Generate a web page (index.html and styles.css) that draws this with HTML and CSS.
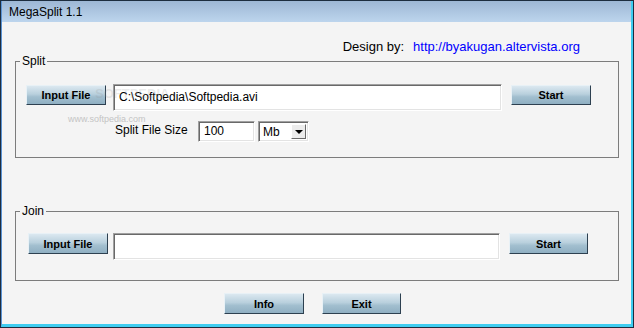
FILE: index.html
```html
<!DOCTYPE html>
<html lang="en">
<head>
  <meta charset="UTF-8" />
  <title>MegaSplit 1.1</title>
  <link rel="stylesheet" href="styles.css">
</head>
<body>
  <div class="window">
    <div class="frame">
      <div class="titlebar">MegaSplit 1.1</div>
      <div class="client">
        <div class="credits">
          <span>Design by:</span>
          <a class="link" href="#">http://byakugan.altervista.org</a>
        </div>

        <div class="group group-split">
          <div class="legend">Split</div>
          <div class="row row-split">
            <button class="btn btn-input">Input File</button>
            <div class="field field-path">C:\Softpedia\Softpedia.avi</div>
            <button class="btn btn-start">Start</button>
          </div>
          <div class="row row-size">
            <span class="size-label">Split File Size</span>
            <div class="field field-size">100</div>
            <div class="field combo">
              <span class="combo-value">Mb</span>
              <span class="combo-btn"><span class="arrow"></span></span>
            </div>
          </div>
          <div class="wm-logo">SOFTPEDIA</div>
          <div class="wm-url">www.softpedia.com</div>
        </div>

        <div class="group group-join">
          <div class="legend">Join</div>
          <div class="row row-join">
            <button class="btn btn-input">Input File</button>
            <div class="field field-path"></div>
            <button class="btn btn-start">Start</button>
          </div>
        </div>

        <div class="footer">
          <button class="btn btn-info">Info</button>
          <button class="btn btn-exit">Exit</button>
        </div>
      </div>
    </div>
  </div>
</body>
</html>
```

FILE: styles.css
```css
* { box-sizing: border-box; }
body {
  margin: 0;
  font-family: 'Liberation Sans', Arial, sans-serif;
  font-size: 12px;
  color: #000;
  background: #f4f4f4;
}
.window {
  width: 634px;
  height: 328px;
  border: 1px solid #1d2d3f;
}
.frame {
  height: 100%;
  border-left: 1px solid #5a93d4;
  border-right: 2px solid #3fcdf0;
  border-bottom: 3px solid #3fcdf0;
  display: flex;
  flex-direction: column;
}
.titlebar {
  height: 21px;
  padding: 3px 0 0 7px;
  font-size: 12px;
  line-height: 16px;
  color: #000;
  background: linear-gradient(#9db7d5, #bdd5ed);
}
.client {
  flex: 1;
  background: #f4f4f4;
}
.credits {
  display: flex;
  justify-content: flex-end;
  gap: 9px;
  margin-top: 18px;
  padding-right: 51px;
  font-size: 13px;
  line-height: 14px;
}
.link {
  color: #0000ff;
  text-decoration: none;
}

/* group boxes */
.group {
  position: relative;
  margin: 0 12px 0 13px;
  border: 1px solid #7c7c7c;
}
.group-split {
  margin-top: 7px;
  padding-bottom: 15px;
}
.group-join {
  margin-top: 53px;
  padding-bottom: 20px;
}
.legend {
  width: fit-content;
  margin: -8px 0 0 4px;
  padding: 0 2px;
  line-height: 14px;
  background: #f4f4f4;
}
.row {
  display: flex;
  align-items: flex-start;
}
.row-split {
  margin-top: 16px;
  padding-left: 10px;
}
.row-size {
  margin-top: 10px;
  padding-left: 99px;
  align-items: center;
}
.row-join {
  margin-top: 15px;
  padding-left: 12px;
}

/* buttons */
.btn {
  height: 21px;
  padding: 0;
  font-family: 'Liberation Sans', Arial, sans-serif;
  font-size: 11px;
  font-weight: bold;
  color: #000;
  border: 1px solid;
  border-color: #e8f1f6 #2d4050 #2d4050 #e8f1f6;
  background: linear-gradient(#dbe8f0, #b9d0dd 45%, #a2bfcf 60%, #8fafc2);
  cursor: pointer;
}
.btn-input { width: 80px; }
.btn-start { width: 80px; margin-left: 9px; }
.row-split .btn { height: 20px; margin-top: 1px; }
.row-join .btn-start { width: 79px; }
.btn-info { width: 80px; }
.btn-exit { width: 79px; margin-left: 18px; }

/* fields */
.field {
  background: #fff;
  border: 1px solid;
  border-color: #a0a0a0 #fff #fff #a0a0a0;
  box-shadow: inset 1px 1px #696969, inset -1px -1px #e3e3e3;
  white-space: nowrap;
}
.field-path {
  height: 27px;
  line-height: 25px;
  padding-left: 5px;
}
.row-split .field-path { width: 389px; margin-left: 7px; }
.row-join .field-path { width: 387px; margin-left: 5px; }
.size-label {
  width: 83px;
  line-height: 14px;
  margin-top: -3px;
}
.field-size {
  width: 57px;
  height: 21px;
  line-height: 19px;
  padding-left: 5px;
}
.combo {
  display: flex;
  align-items: center;
  justify-content: space-between;
  width: 51px;
  height: 21px;
  margin-left: 3px;
  padding: 0 2px 0 4px;
}
.combo-btn {
  display: flex;
  align-items: center;
  justify-content: center;
  width: 15px;
  height: 15px;
  background: #ececec;
  border: 1px solid;
  border-color: #fff #6a6a6a #6a6a6a #fff;
}
.arrow {
  width: 0;
  height: 0;
  border-left: 4px solid transparent;
  border-right: 4px solid transparent;
  border-top: 4px solid #000;
  margin-top: 1px;
}

/* watermark overlay */
.wm-logo {
  position: absolute;
  left: 79px;
  top: 24px;
  font-size: 13px;
  line-height: 16px;
  font-weight: bold;
  color: rgba(150, 150, 150, 0.2);
  pointer-events: none;
}
.wm-url {
  position: absolute;
  left: 52px;
  top: 52px;
  font-size: 9px;
  line-height: 10px;
  color: #c4c4c4;
}

.footer {
  display: flex;
  margin-top: 12px;
  padding-left: 222px;
}
```
